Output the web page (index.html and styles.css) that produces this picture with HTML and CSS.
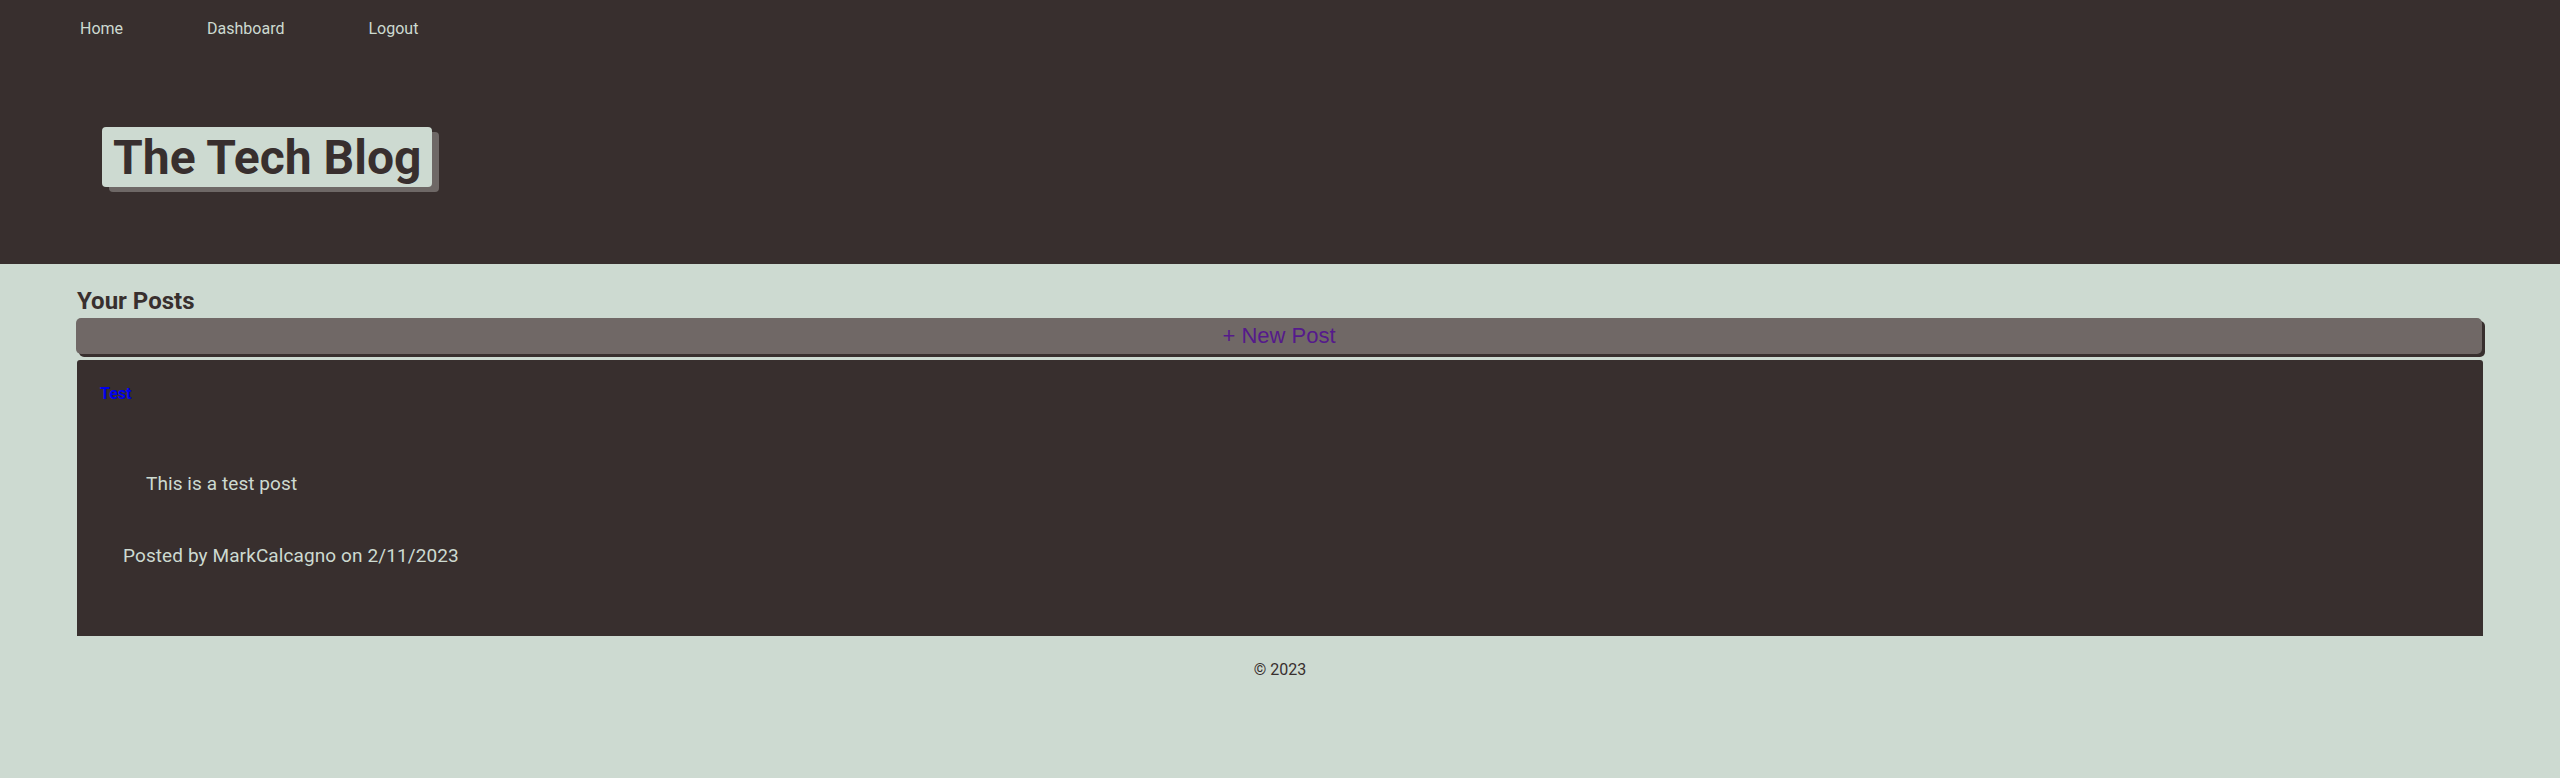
FILE: index.html
```html
<!DOCTYPE html>
<html lang="en">
<head>
<meta charset="utf-8">
<title>The Tech Blog</title>
<link rel="stylesheet" href="styles.css">
</head>
<body>
<header class="site-header">
  <nav class="nav">
    <a class="nav-link" href="#">Home</a>
    <a class="nav-link" href="#">Dashboard</a>
    <a class="nav-link" href="#">Logout</a>
  </nav>
  <h1 class="site-title">The Tech Blog</h1>
</header>
<main class="main">
  <h2 class="section-title">Your Posts</h2>
  <a class="new-post" href="#">+ New Post</a>
  <article class="post-card">
    <h3 class="post-title"><a href="#">Test</a></h3>
    <p class="post-body">This is a test post</p>
    <p class="post-meta">Posted by <span class="author">MarkCalcagno</span> on 2/11/2023</p>
  </article>
</main>
<footer class="site-footer">© 2023</footer>
</body>
</html>
```
FILE: styles.css
```css
html {
  background: #cddad1;
}
body {
  margin: 0;
  background: #cddad1;
  font-family: Roboto, "Liberation Sans", sans-serif;
  color: #382f2e;
}
.site-header {
  height: 264px;
  box-sizing: border-box;
  background: #382f2e;
  padding-top: 19px;
  display: flex;
  flex-direction: column;
  align-items: flex-start;
}
.nav {
  display: flex;
  gap: 84px;
  padding-left: 80px;
}
.nav-link {
  font-size: 16px;
  line-height: 20px;
  color: #cddad1;
  text-decoration: none;
}
.site-title {
  margin: 88px 0 0 102px;
  padding: 0 11px;
  height: 60px;
  font-size: 48px;
  line-height: 61px;
  font-weight: 700;
  color: #382f2e;
  background: #cddad1;
  border-radius: 4px;
  box-shadow: 7px 5px 0 #6e6866;
}
.main {
  padding: 0 77px 0 76px;
  display: flex;
  flex-direction: column;
}
.section-title {
  margin: 22px 0 0 1px;
  font-size: 24px;
  line-height: 30px;
  font-weight: 700;
}
.new-post {
  margin: 2px 1px 0 0;
  height: 36px;
  line-height: 36px;
  text-align: center;
  background: #706866;
  border-radius: 5px;
  box-shadow: 3px 3px 0 #382f2e;
  font-family: "Liberation Sans", Arial, sans-serif;
  font-size: 22px;
  color: #551a8b;
  text-decoration: none;
}
.post-card {
  margin: 6px 0 0 1px;
  height: 276px;
  box-sizing: border-box;
  padding: 24px 23px;
  background: #382f2e;
  border-radius: 3px 3px 0 0;
  color: #cddad1;
}
.post-title {
  margin: 0;
  font-size: 16px;
  line-height: 20px;
  font-weight: 700;
}
.post-title a {
  color: #0000ee;
  text-decoration: none;
}
.post-body {
  margin: 68px 0 0 46px;
  font-size: 19px;
  line-height: 24px;
  letter-spacing: 0.08px;
}
.post-meta {
  margin: 48px 0 0 23px;
  font-size: 19px;
  line-height: 24px;
  letter-spacing: 0.1px;
}
.site-footer {
  margin-top: 24px;
  text-align: center;
  font-size: 16px;
  line-height: 20px;
  color: #382f2e;
}
```
